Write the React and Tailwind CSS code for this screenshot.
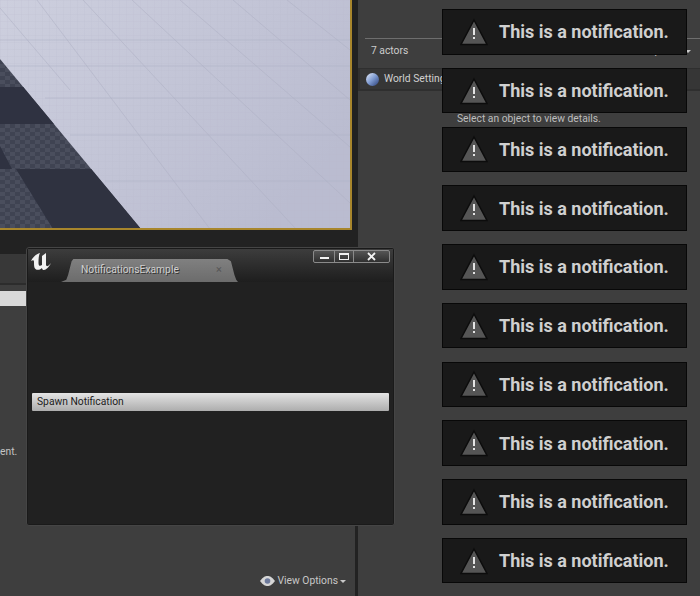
import React from 'react';

const notifications = Array.from({ length: 10 }, (_, i) => i);

const gridLines = [
  [37, 0, 210, 229], [83, 0, 296, 229], [132, 0, 350, 203], [180, 0, 350, 147], [233, 0, 350, 100], [287, 0, 350, 50],
  [0, 8, 70, 90], [0, 40, 350, 40], [0, 66, 350, 66], [45, 98, 350, 98], [70, 135, 350, 135], [105, 181, 350, 181],
];

const Viewport = () => (
  <svg width="350" height="228" viewBox="0 0 350 228" className="block">
    <defs>
      <linearGradient id="floor" x1="0" y1="0" x2="1" y2="0.6">
        <stop offset="0" stopColor="#cdcfde" />
        <stop offset="1" stopColor="#babcd0" />
      </linearGradient>
      <pattern id="fine" width="7" height="7" patternUnits="userSpaceOnUse">
        <path d="M7 0H0V7" fill="none" stroke="#b8bace" strokeOpacity="0.3" strokeWidth="1" />
      </pattern>
      <pattern id="checker" width="10" height="8" patternUnits="userSpaceOnUse">
        <rect width="10" height="8" fill="#3f4352" />
        <rect width="5" height="4" fill="#4a4e5d" />
        <rect x="5" y="4" width="5" height="4" fill="#4a4e5d" />
      </pattern>
      <clipPath id="wedge">
        <polygon points="0,59 141,229 0,229" />
      </clipPath>
    </defs>
    <rect width="350" height="228" fill="url(#floor)" />
    <rect width="350" height="228" fill="url(#fine)" />
    {gridLines.map(([x1, y1, x2, y2]) => (
      <line key={`${x1}-${y1}`} x1={x1} y1={y1} x2={x2} y2={y2} stroke="#aeb0c3" strokeOpacity="0.5" />
    ))}
    <g clipPath="url(#wedge)">
      <rect y="59" width="141" height="170" fill="url(#checker)" />
      <rect y="87" width="70" height="37" fill="#2f3241" />
      <polygon points="0,146 12,169 0,169" fill="#2f3241" />
      <polygon points="16,169 141,169 141,229 53,229" fill="#2f3240" />
    </g>
  </svg>
);

const WarningIcon = () => (
  <svg width="28" height="28" viewBox="0 0 28 28" className="shrink-0">
    <polygon points="14,2 27,26.500 1,26.500" fill="#555555" stroke="#0c0c0c" strokeWidth="1.5" />
    <rect x="13" y="10" width="2" height="7" fill="#e4e4e4" />
    <rect x="13" y="19" width="2" height="2" fill="#e4e4e4" />
  </svg>
);

const Notification = () => (
  <div className="h-[45.5px] w-[245px] flex items-center pl-[17px] bg-[#191919] border border-[#080808] shrink-0">
    <WarningIcon />
    <span className="ml-[11px] text-[18px] font-bold text-[#d0d0d0] whitespace-nowrap">This is a notification.</span>
  </div>
);

const EditorWindow = () => (
  <div className="absolute left-[26px] top-[247px] w-[369px] h-[279px] bg-[#1a1a1a] border border-[#454545] rounded-[3px] p-[1px]">
    <div className="h-full bg-[#212121] flex flex-col">
      <div className="relative h-[33px] shrink-0 bg-gradient-to-b from-[#3d3d3d] to-[#1e1e1e]">
        <svg width="20" height="18" viewBox="0 0 20 18" className="absolute left-[3px] top-[4px]">
          <path d="M0 8C2 4 5 1 9 0C8 2 7.500 4 7.500 10C7.500 13 9 13.500 11 12V3L15 0V12C15.500 14 17 13.500 20 10C18 14 15 17 13 17C12 17 11 16.500 11 15C9 17 6 17.500 4.500 16C3 15 3 12 3 9C3 7 2 6.500 0 8Z" fill="#f2f2f2" />
        </svg>
        <div className="absolute left-[33px] top-[10px] w-[177px] h-[23px] bg-gradient-to-b from-[#808080] to-[#6c6c6c] [clip-path:polygon(0_100%,3%_90%,4%_70%,6%_10%,7%_0,94%_0,96%_10%,98%_70%,99%_90%,100%_100%)] flex items-center pl-[20px] pb-[2px]">
          <span className="text-[10.3px] text-[#cfcfcf] [text-shadow:1px_1px_0_#333333]">NotificationsExample</span>
          <span className="absolute left-[155px] top-[4px] text-[11px] leading-[14px] text-[#565656]">×</span>
        </div>
        <div className="absolute right-[3px] top-[1px] flex h-[13px] border border-[#8a8a8a] rounded-[2px] bg-gradient-to-b from-[#555555] to-[#303030]">
          <div className="w-[21px] flex items-center justify-center border-r border-[#8a8a8a]">
            <div className="w-[9px] h-[2px] mt-[3px] bg-[#f0f0f0]" />
          </div>
          <div className="w-[19px] flex items-center justify-center border-r border-[#8a8a8a]">
            <div className="w-[10px] h-[7px] border border-t-2 border-[#f0f0f0]" />
          </div>
          <div className="w-[35px] flex items-center justify-center">
            <svg width="9" height="9" viewBox="0 0 9 9">
              <path d="M1 1L8 8M8 1L1 8" stroke="#f2f2f2" strokeWidth="1.8" />
            </svg>
          </div>
        </div>
      </div>
      <div className="flex-1 flex flex-col justify-center pl-[4px] pr-[4px] pb-[2px]">
        <button className="h-[18px] w-full text-left pl-[5px] text-[10.3px] leading-[18px] text-[#1c1c1c] bg-gradient-to-b from-[#e4e4e4] to-[#adadad] rounded-[1px]">Spawn Notification</button>
      </div>
    </div>
  </div>
);

export default function App() {
  return (
    <div className="relative w-[700px] h-[596px] overflow-hidden flex bg-[#3e3e3e] font-['Roboto',sans-serif]">
      <div className="w-[355px] h-full shrink-0 flex flex-col bg-[#222222]">
        <div className="h-[230px] w-[352px] shrink-0 border-r-2 border-b-2 border-[#a8862c]">
          <Viewport />
        </div>
        <div className="h-[24px] shrink-0" />
        <div className="flex-1 relative bg-[#3e3e3e] flex flex-col">
          <div className="h-[31px] shrink-0 bg-[#383838] border-b-2 border-[#2c2c2c]" />
          <div className="h-[15px] mt-[6px] shrink-0 bg-[#d9d9d9]" />
          <div className="mt-[139px] h-[14px] leading-[14px] text-[10.3px] text-[#c4c4c4] whitespace-nowrap">ent.</div>
          <div className="mt-auto mb-[8px] flex items-center justify-end pr-[9px] h-[14px]">
            <svg width="15" height="10" viewBox="0 0 15 10" className="mr-[3px]">
              <path d="M0 5C3 1 5 0 7.500 0S12 1 15 5C12 9 10 10 7.500 10S3 9 0 5Z" fill="#d6d6d6" />
              <circle cx="7.5" cy="5" r="2.8" fill="#6d7a9c" />
            </svg>
            <span className="text-[10.3px] text-[#c8c8c8]">View Options</span>
            <span className="ml-[2px] w-0 h-0 border-x-[3.5px] border-x-transparent border-t-[3.5px] border-t-[#c8c8c8]" />
          </div>
        </div>
      </div>
      <div className="w-[3px] h-full shrink-0 bg-[#222222]" />
      <div className="flex-1 min-w-0 relative">
        <div className="ml-[7px] mt-[38px] h-[1px] bg-[#6e6e6e]" />
        <div className="ml-[13px] pr-[9px] mt-[5px] h-[14px] leading-[14px] text-[10.3px] text-[#cccccc] flex items-center justify-between">
          <span>7 actors</span>
          <span className="flex items-center">
            View Options
            <span className="ml-[2px] w-0 h-0 border-x-[3.5px] border-x-transparent border-t-[3.5px] border-t-[#c8c8c8]" />
          </span>
        </div>
        <div className="mt-[10px] h-[23px] bg-[#2f2f2f] pt-[1px]">
          <div className="h-[20px] ml-[2px] bg-[#363636] flex items-center pl-[6px]">
            <div className="w-[13px] h-[13px] rounded-full bg-gradient-to-br from-[#e8eefc] via-[#7e9ad0] to-[#2c3f78]" />
            <span className="ml-[5px] text-[10.3px] text-[#d0d0d0] whitespace-nowrap">World Settings</span>
          </div>
        </div>
        <div className="ml-[99px] mt-[21px] h-[14px] leading-[14px] text-[10.3px] text-[#bdbdbd] whitespace-nowrap">Select an object to view details.</div>
      </div>
      <EditorWindow />
      <div className="absolute left-[442px] top-[9.2px] flex flex-col gap-[13.25px]">
        {notifications.map((n) => (
          <Notification key={n} />
        ))}
      </div>
    </div>
  );
}
